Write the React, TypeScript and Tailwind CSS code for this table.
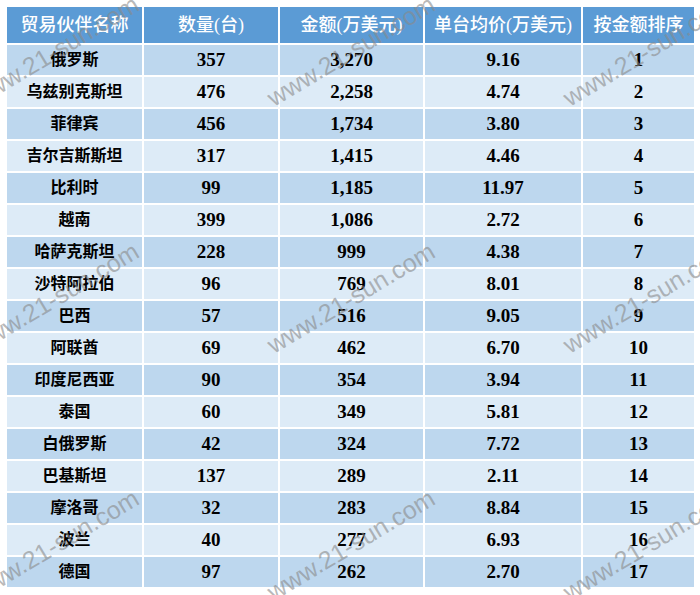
const rows: [string, string, string, string, string][] = [
  ["俄罗斯", "357", "3,270", "9.16", "1"],
  ["乌兹别克斯坦", "476", "2,258", "4.74", "2"],
  ["菲律宾", "456", "1,734", "3.80", "3"],
  ["吉尔吉斯斯坦", "317", "1,415", "4.46", "4"],
  ["比利时", "99", "1,185", "11.97", "5"],
  ["越南", "399", "1,086", "2.72", "6"],
  ["哈萨克斯坦", "228", "999", "4.38", "7"],
  ["沙特阿拉伯", "96", "769", "8.01", "8"],
  ["巴西", "57", "516", "9.05", "9"],
  ["阿联酋", "69", "462", "6.70", "10"],
  ["印度尼西亚", "90", "354", "3.94", "11"],
  ["泰国", "60", "349", "5.81", "12"],
  ["白俄罗斯", "42", "324", "7.72", "13"],
  ["巴基斯坦", "137", "289", "2.11", "14"],
  ["摩洛哥", "32", "283", "8.84", "15"],
  ["波兰", "40", "277", "6.93", "16"],
  ["德国", "97", "262", "2.70", "17"],
];

const headers = ["贸易伙伴名称", "数量(台)", "金额(万美元)", "单台均价(万美元)", "按金额排序"];

// watermark centres, repeated over the sheet
const marks = [
  [55, 51], [351, 51], [647, 51],
  [55, 298], [351, 298], [647, 298],
  [55, 545], [351, 545], [647, 545],
];

export default function App() {
  return (
    <div className="relative w-[700px] h-[595px] bg-white overflow-hidden">
      <div className="pl-[7px] pt-[7px]">
        <div className="grid grid-cols-[135px_134px_143px_156px_111px] gap-[2px] w-[687px]">
          {headers.map((h) => (
            <div
              key={h}
              className="h-[36px] flex items-center justify-center bg-[#5b9bd5] text-white text-[18px] font-medium whitespace-nowrap"
              style={{ fontFamily: '"Liberation Serif", "Noto Sans CJK SC", serif' }}
            >
              {h}
            </div>
          ))}
          {rows.map((r, i) =>
            r.map((c, j) => (
              <div
                key={i + "-" + j}
                className={
                  "h-[30px] flex items-center justify-center font-bold text-black whitespace-nowrap " +
                  (i % 2 === 0 ? "bg-[#bdd7ee] " : "bg-[#ddebf7] ") +
                  (j === 0 ? "text-[16px]" : "text-[19px]")
                }
                style={{ fontFamily: '"Liberation Serif", "Noto Sans CJK SC", serif' }}
              >
                {c}
              </div>
            ))
          )}
        </div>
      </div>

      {/* watermark */}
      {marks.map(([x, y], k) => (
        <span
          key={k}
          className="absolute pointer-events-none whitespace-nowrap text-[25px] leading-none text-[#8a8a8a]/60 font-['Liberation_Sans',sans-serif] -translate-x-1/2 -translate-y-1/2 -rotate-[31deg]"
          style={{ left: x, top: y }}
        >
          www.21-sun.com
        </span>
      ))}
    </div>
  );
}
